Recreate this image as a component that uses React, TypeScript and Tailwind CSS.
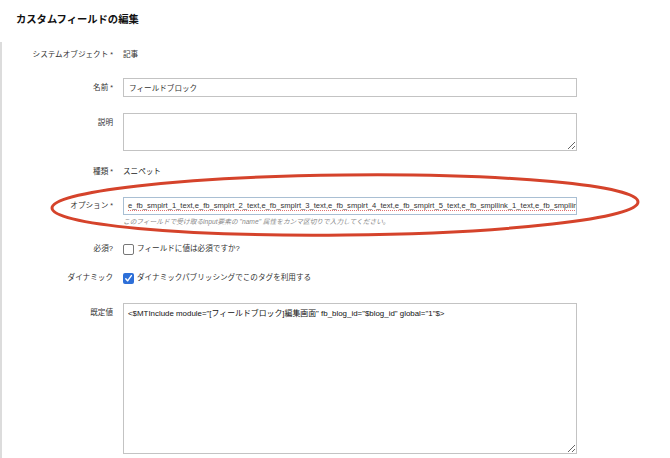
const FONT = "font-['Liberation_Sans','Noto_Sans_CJK_JP',sans-serif]"

const OPTIONS =
  'e_fb_smplrt_1_text,e_fb_smplrt_2_text,e_fb_smplrt_3_text,e_fb_smplrt_4_text,e_fb_smplrt_5_text,e_fb_smpllink_1_text,e_fb_smpllink_2_text'

function Label({ text, required, top }: { text: string; required?: boolean; top?: boolean }) {
  return (
    <div
      className={`w-[111px] shrink-0 text-right text-[7.6px] leading-[14px] text-[#333] ${top ? 'pt-[3px]' : 'self-center'}`}
    >
      {text}
      {required && <span className="ml-[2px] text-[7px] align-top">*</span>}
    </div>
  )
}

function Row({ children, className = '' }: { children: React.ReactNode; className?: string }) {
  return <div className={`flex gap-[10px] ${className}`}>{children}</div>
}

export default function App() {
  return (
    <div className={`relative w-[670px] h-[458px] overflow-hidden bg-white ${FONT}`}>
      <h1 className="pl-[16px] pt-[12px] h-[42px] text-[10.3px] leading-[16px] font-bold text-[#111]">
        カスタムフィールドの編集
      </h1>

      <div className="border-l-2 border-[#dcdcdc] h-[416px] pt-[6px]">
        <Row>
          <Label text="システムオブジェクト" required />
          <div className="text-[7.6px] leading-[14px] text-[#333]">記事</div>
        </Row>

        <Row className="mt-[16px]">
          <Label text="名前" required />
          <input
            readOnly
            value="フィールドブロック"
            className="w-[454px] h-[19px] border border-[#c3c3c3] px-[5px] text-[7.6px] text-[#333] outline-none"
          />
        </Row>

        <Row className="mt-[16px]">
          <Label text="説明" top />
          <textarea readOnly className="w-[454px] h-[38px] border border-[#c3c3c3] outline-none" />
        </Row>

        <Row className="mt-[14px]">
          <Label text="種類" required />
          <div className="text-[7.6px] leading-[14px] text-[#222]">スニペット</div>
        </Row>

        <Row className="mt-[18px]">
          <Label text="オプション" required />
          <div className="w-[454px] h-[18px] border border-[#a9bfd3] px-[4px] overflow-hidden whitespace-nowrap text-[7.6px] leading-[16px] text-[#333] underline decoration-dotted decoration-[#e07070] underline-offset-2">
            {OPTIONS}
          </div>
        </Row>
        <Row className="mt-[1px]">
          <div className="w-[111px] shrink-0" />
          <div className="text-[6.7px] leading-[12px] italic text-[#8a8a8a]">
            このフィールドで受け取るinput要素の "name" 属性をカンマ区切りで入力してください。
          </div>
        </Row>

        <Row className="mt-[14px]">
          <Label text="必須?" />
          <label className="flex items-center gap-[3px] text-[7.6px] leading-[14px] text-[#333]">
            <span className="w-[11px] h-[11px] rounded-[2px] border border-[#777] bg-white" />
            フィールドに値は必須ですか?
          </label>
        </Row>

        <Row className="mt-[15px]">
          <Label text="ダイナミック" />
          <label className="flex items-center gap-[3px] text-[7.6px] leading-[14px] text-[#333]">
            <span className="w-[11px] h-[11px] rounded-[2px] bg-[#2d6fd8] flex items-center justify-center">
              <svg width="9" height="9" viewBox="0 0 10 10">
                <path d="M2 5.2 L4 7.6 L8.2 1.8" fill="none" stroke="white" strokeWidth="1.6" strokeLinecap="round" strokeLinejoin="round" />
              </svg>
            </span>
            ダイナミックパブリッシングでこのタグを利用する
          </label>
        </Row>

        <Row className="mt-[18px]">
          <Label text="既定値" top />
          <textarea
            readOnly
            value={'<$MTInclude module="[フィールドブロック]編集画面" fb_blog_id="$blog_id" global="1"$>'}
            className="w-[454px] h-[151px] border border-[#c3c3c3] px-[4px] py-[3px] text-[7.9px] leading-[14px] text-[#111] outline-none resize"
          />
        </Row>
      </div>

      <svg className="absolute left-0 top-0 pointer-events-none" width="670" height="458">
        <ellipse cx="345" cy="205" rx="293" ry="30" fill="none" stroke="#d5432b" strokeWidth="3" transform="rotate(-0.6 345 205)" />
      </svg>
    </div>
  )
}
